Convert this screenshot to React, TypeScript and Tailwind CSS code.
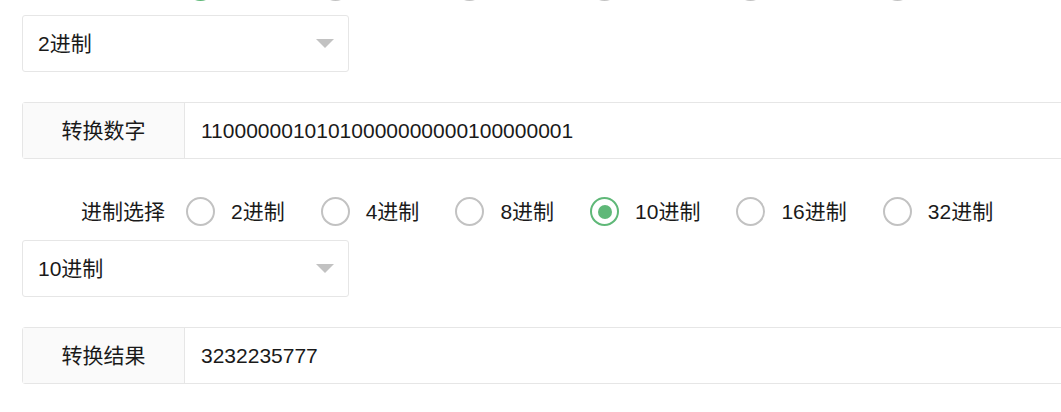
import React from "react";

const OPTIONS = ["2进制", "4进制", "8进制", "10进制", "16进制", "32进制"];

function RadioRow({ checked, className = "" }: { checked: string; className?: string }) {
  return (
    <div className={"flex items-center h-[29px] " + className}>
      <div className="w-[143px] text-right shrink-0">进制选择</div>
      <div className="flex items-center ml-[21px]">
        {OPTIONS.map((o) => {
          const on = o === checked;
          return (
            <div key={o} className="flex items-center mr-[36px]">
              <div
                className={
                  "w-[29px] h-[29px] rounded-full border-2 flex items-center justify-center shrink-0 " +
                  (on ? "border-[#5fb878]" : "border-[#c2c2c2]")
                }
              >
                {on && <div className="w-[14px] h-[14px] rounded-full bg-[#5fb878]" />}
              </div>
              <span className="ml-[16px] whitespace-nowrap">{o}</span>
            </div>
          );
        })}
      </div>
    </div>
  );
}

function Select({ value, className = "" }: { value: string; className?: string }) {
  return (
    <div
      className={
        "w-[327px] h-[57px] border border-[#e6e6e6] rounded-[3px] flex items-center justify-between pl-[15px] pr-[14px] bg-white " +
        className
      }
    >
      <span>{value}</span>
      <svg width="18" height="9" viewBox="0 0 18 9">
        <polygon points="0,0 18,0 9,9" fill="#c2c2c2" />
      </svg>
    </div>
  );
}

function InputRow({ label, value, className = "" }: { label: string; value: string; className?: string }) {
  return (
    <div className={"flex h-[57px] border border-[#e6e6e6] rounded-[3px] mr-[-20px] " + className}>
      <div className="w-[162px] shrink-0 bg-[#fafafa] border-r border-[#e6e6e6] flex items-center justify-center">
        {label}
      </div>
      <div className="flex-1 flex items-center pl-[16px] bg-white">{value}</div>
    </div>
  );
}

export default function App() {
  return (
    <div
      className="w-full h-[412px] overflow-hidden bg-white text-[#1a1a1a] text-[21px]"
      style={{ fontFamily: '"Liberation Sans", "Noto Sans CJK SC", sans-serif' }}
    >
      <div className="flex flex-col pl-[22px] mt-[-28px]">
        <RadioRow checked="2进制" />
        <Select value="2进制" className="mt-[14px]" />
        <InputRow label="转换数字" value="11000000101010000000000100000001" className="mt-[30px]" />
        <RadioRow checked="10进制" className="mt-[38px]" />
        <Select value="10进制" className="mt-[14px]" />
        <InputRow label="转换结果" value="3232235777" className="mt-[30px]" />
      </div>
    </div>
  );
}
